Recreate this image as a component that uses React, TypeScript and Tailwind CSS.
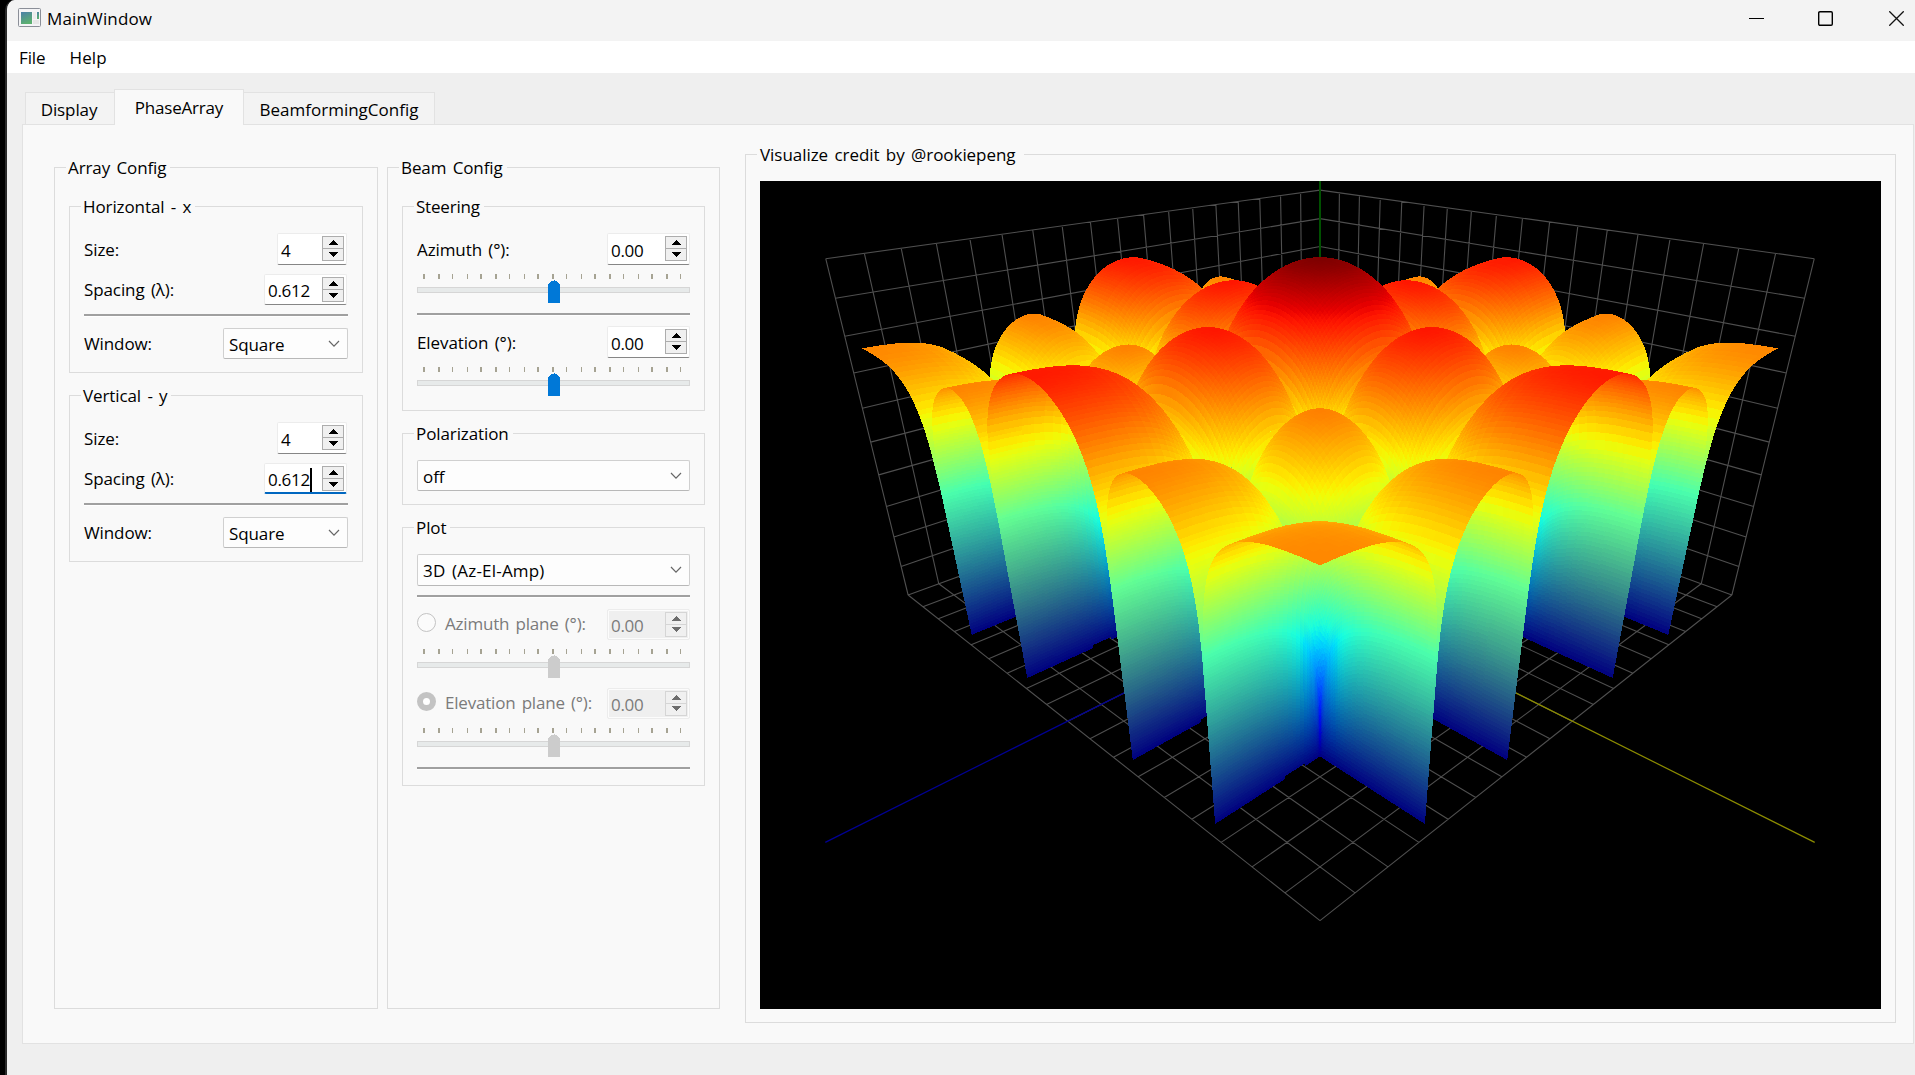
import React, { useMemo } from "react";

/* ---------- 3D pattern plot ---------- */

const VIEW_W = 1121;
const VIEW_H = 828;
const CENTER_X = 560;
const FOCAL = VIEW_W / 2 / Math.tan(Math.PI / 6);
const DIST = 300;
const SIN_E = 0.5;
const COS_E = Math.sqrt(3) / 2;
const BINS = 512;
const SPACING = 0.612;
const PATCH = 3;

type Vec = [number, number, number];

function project(x: number, y: number, z: number): [number, number] {
  const f = -(x + y) / Math.SQRT2;
  const r = (y - x) / Math.SQRT2;
  const depth = DIST + f * COS_E - z * SIN_E;
  const up = z * COS_E + f * SIN_E;
  return [CENTER_X + (FOCAL * r) / depth, VIEW_H / 2 - (FOCAL * up) / depth];
}

function ramp(v: number, stops: number[][]): number {
  for (let i = 1; i < stops.length; i++) {
    if (v <= stops[i][0]) {
      const [a, p] = stops[i - 1];
      const [b, q] = stops[i];
      return p + ((q - p) * (v - a)) / (b - a);
    }
  }
  return stops[stops.length - 1][1];
}

function jet(v: number): Vec {
  return [
    255 * ramp(v, [[0, 0], [0.35, 0], [0.66, 1], [0.89, 1], [1, 0.5]]),
    255 * ramp(v, [[0, 0], [0.125, 0], [0.375, 1], [0.64, 1], [0.91, 0], [1, 0]]),
    255 * ramp(v, [[0, 0.5], [0.11, 1], [0.34, 1], [0.65, 0], [1, 0]]),
  ];
}

// Array factor of a four element line, in dB, at the given bin.
function gain(k: number): number {
  if (k === 0) return 0;
  const psi = (2 * Math.PI * k) / BINS;
  const af = Math.abs(Math.sin(2 * psi) / (4 * Math.sin(psi / 2)));
  return 20 * Math.log10(Math.max(af, 1e-9));
}

// Bins, dense near each null and sparse on the lobes.
function sampleBins(): number[] {
  const offs = [0, 1, 2, 3, 4, 6, 8, 10, 13, 16, 19, 22, 25, 28, 31, 35, 39, 43, 47, 51, 55, 59, 64];
  const set = new Set<number>();
  for (const n of [-256, -128, 128, 256]) {
    for (const o of offs) {
      set.add(n + o);
      set.add(n - o);
    }
  }
  for (let k = -60; k <= 60; k += 4) set.add(k);
  set.add(313);
  set.add(-313);
  return [...set].filter((k) => Math.abs(k) <= 313).sort((a, b) => a - b);
}

function buildSurface(): { d: string; c: string }[] {
  const bins = sampleBins();
  const n = bins.length;
  const ang = bins.map((k) => (Math.asin(k / BINS / SPACING) * 180) / Math.PI);
  const g = bins.map(gain);
  const zs: number[][] = [];
  const cs: Vec[][] = [];
  for (let i = 0; i < n; i++) {
    zs.push([]);
    cs.push([]);
    for (let j = 0; j < n; j++) {
      const z = Math.max(0, 100 + g[i] + g[j]);
      zs[i].push(z);
      cs[i].push(jet(z / 100));
    }
  }
  const out: { d: string; c: string }[] = [];
  let last = "";
  let buf: string[] = [];
  const flush = () => {
    if (buf.length) out.push({ d: buf.join(""), c: last });
    buf = [];
  };
  const mix = (a: number, b: number, c: number, d: number, s: number, t: number) =>
    (a * (1 - s) + b * s) * (1 - t) + (c * (1 - s) + d * s) * t;
  const q = (v: number) => Math.min(255, Math.round(v / 2) * 2);
  const len = (a: number[], b: number[]) => Math.hypot(a[0] - b[0], a[1] - b[1]);
  for (let i = 0; i < n - 1; i++) {
    for (let j = 0; j < n - 1; j++) {
      const p00 = project(ang[i], ang[j], zs[i][j]);
      const p10 = project(ang[i + 1], ang[j], zs[i + 1][j]);
      const p01 = project(ang[i], ang[j + 1], zs[i][j + 1]);
      const p11 = project(ang[i + 1], ang[j + 1], zs[i + 1][j + 1]);
      // Only the steep cells beside a null need finer patches.
      const steep = Math.min(zs[i][j], zs[i + 1][j], zs[i][j + 1], zs[i + 1][j + 1]) < 60;
      const size = steep ? PATCH : PATCH * 2;
      const ms = Math.max(1, Math.round(Math.max(len(p00, p10), len(p01, p11)) / (size + 1)));
      const mt = Math.max(1, Math.round(Math.max(len(p00, p01), len(p10, p11)) / size));
      const pts: string[][] = [];
      for (let a = 0; a <= ms; a++) {
        pts.push([]);
        for (let b = 0; b <= mt; b++) {
          const s = a / ms;
          const t = b / mt;
          const p = project(
            ang[i] * (1 - s) + ang[i + 1] * s,
            ang[j] * (1 - t) + ang[j + 1] * t,
            mix(zs[i][j], zs[i + 1][j], zs[i][j + 1], zs[i + 1][j + 1], s, t),
          );
          pts[a].push(p[0].toFixed(2) + " " + p[1].toFixed(2));
        }
      }
      for (let a = 0; a < ms; a++) {
        for (let b = 0; b < mt; b++) {
          const s = (a + 0.5) / ms;
          const t = (b + 0.5) / mt;
          const ch = [0, 1, 2].map((k) =>
            q(mix(cs[i][j][k], cs[i + 1][j][k], cs[i][j + 1][k], cs[i + 1][j + 1][k], s, t)),
          );
          const c = `rgb(${ch[0]},${ch[1]},${ch[2]})`;
          if (c !== last) {
            flush();
            last = c;
          }
          buf.push(`M${pts[a][b]}L${pts[a + 1][b]}L${pts[a + 1][b + 1]}L${pts[a][b + 1]}Z`);
        }
      }
    }
  }
  flush();
  return out;
}

function segment(a: Vec, b: Vec): string {
  const p = project(...a);
  const r = project(...b);
  return `M${p[0].toFixed(2)} ${p[1].toFixed(2)}L${r[0].toFixed(2)} ${r[1].toFixed(2)}`;
}

function buildGrid(): string {
  const parts: string[] = [];
  for (let v = -90; v <= 90; v += 10) {
    parts.push(segment([v, -90, 0], [v, 90, 0]), segment([-90, v, 0], [90, v, 0]));
    parts.push(segment([v, -90, 0], [v, -90, 100]), segment([-90, v, 0], [-90, v, 100]));
  }
  for (let z = 0; z <= 100; z += 10) {
    parts.push(segment([-90, -90, z], [90, -90, z]), segment([-90, -90, z], [-90, 90, z]));
  }
  return parts.join("");
}

function PatternPlot() {
  const surface = useMemo(buildSurface, []);
  const grid = useMemo(buildGrid, []);
  return (
    <svg width={VIEW_W} height={VIEW_H} viewBox={`0 0 ${VIEW_W} ${VIEW_H}`} className="block bg-black">
      <path d={grid} stroke="#4f4f4f" strokeWidth="1.1" fill="none" />
      <path d={segment([0, 0, 0], [150, 0, 0])} stroke="#000094" strokeWidth="1.2" />
      <path d={segment([0, 0, 0], [0, 150, 0])} stroke="#8c8c00" strokeWidth="1.2" />
      <path d="M560 0V400" stroke="#005000" strokeWidth="2" />
      <g shapeRendering="crispEdges">
        {surface.map((s, i) => (
          <path key={i} d={s.d} fill={s.c} />
        ))}
      </g>
    </svg>
  );
}

/* ---------- widgets ---------- */

function Group(props: { title: string; className: string; legend?: string; children?: React.ReactNode }) {
  return (
    <fieldset className={"min-w-0 border border-[#dcdcdc] " + props.className}>
      <legend className="ml-[11px] h-6 pl-[2px] pr-1 leading-[25px] whitespace-nowrap">
        <span className={props.legend ?? ""}>{props.title}</span>
      </legend>
      {props.children}
    </fieldset>
  );
}

function Separator({ className = "" }: { className?: string }) {
  return <div className={"h-[3px] shrink-0 border-t-2 border-b border-t-[#a0a0a0] border-b-white " + className} />;
}

function Arrow({ down, disabled }: { down?: boolean; disabled?: boolean }) {
  return (
    <svg width="10" height="5" viewBox="0 0 10 5" shapeRendering="crispEdges">
      <path d={down ? "M0 0h10L5 5z" : "M0 5h10L5 0z"} fill={disabled ? "#6d6d6d" : "#000"} />
    </svg>
  );
}

function SpinBox(props: { value: string; width: string; disabled?: boolean; focus?: boolean; height?: string }) {
  const { disabled, focus } = props;
  const frame = disabled
    ? "border border-[#ececec] bg-[#efefef] text-[#7b7b7b] shadow-[inset_0_0_0_1px_#fcfcfc]"
    : focus
      ? "border border-[#ececec] border-b-2 border-b-[#0067c0] bg-white"
      : "border border-[#ececec] border-b-[#868686] bg-white";
  const edge = disabled ? "border-[#d5d5d5]" : "border-[#adadad]";
  return (
    <div className={"flex items-start justify-between rounded-[2px] pl-[3px] " + props.width + " " + (props.height ?? "h-8") + " " + frame}>
      <span className="flex h-full items-center pt-[3px] tracking-[-0.3px]">
        {props.value}
        {focus && <span className="h-6 w-[2px] bg-black" />}
      </span>
      <span className={"mt-[2px] mr-[2px] flex h-[25px] w-[22px] flex-col border bg-[#f0f0f0] " + edge}>
        <span className={"flex h-3 items-center justify-center border-b " + edge}>
          <Arrow disabled={disabled} />
        </span>
        <span className="flex flex-1 items-center justify-center pb-px">
          <Arrow down disabled={disabled} />
        </span>
      </span>
    </div>
  );
}

function ComboBox({ value, className }: { value: string; className: string }) {
  return (
    <div className={"flex shrink-0 items-center justify-between rounded-[2px] border border-[#d0d0d0] border-b-[#b8b8b8] bg-[#fdfdfd] pr-[7px] pl-[5px] " + className}>
      <span className="pt-[2px]">{value}</span>
      <svg width="12" height="8" viewBox="0 0 12 8" fill="none" stroke="#666" strokeWidth="1.2">
        <path d="M1 1l5 5.2L11 1" />
      </svg>
    </div>
  );
}

const TICKS = [7, 22, 35, 50, 64, 79, 92, 107, 121, 136, 149, 164, 178, 193, 206, 221, 235, 250, 263];
const WIDE_TICKS = new Set([7, 22, 64, 79, 121, 136, 178, 193, 235, 250]);

function Slider({ disabled, className = "" }: { disabled?: boolean; className?: string }) {
  return (
    <svg width="273" height="29" viewBox="0 0 273 29" shapeRendering="crispEdges" className={"block shrink-0 " + className}>
      {TICKS.map((x) => (
        <rect key={x} x={WIDE_TICKS.has(x) ? x - 1 : x} y="0" width={WIDE_TICKS.has(x) ? 2 : 1} height="5" fill="#a6a393" />
      ))}
      <rect x="0.5" y="13.5" width="272" height="5" fill="#e7eaea" stroke="#d6d6d6" />
      <path d="M131 10l4-3h1l1-1l1 1h1l4 3v19h-12z" fill={disabled ? "#cccccc" : "#0078d7"} />
    </svg>
  );
}

function Row({ label, children, className = "h-8" }: { label: string; children: React.ReactNode; className?: string }) {
  return (
    <div className={"flex shrink-0 items-center justify-between " + className}>
      <span className="pt-px whitespace-nowrap">{label}</span>
      {children}
    </div>
  );
}

function ArrayAxis({ title, focus }: { title: string; focus?: boolean }) {
  return (
    <Group title={title} className="h-[179px] w-[294px]">
      <div className="flex flex-col px-[14px] pt-[15px]">
        <Row label="Size:" className="h-8 pr-px">
          <SpinBox value="4" width="w-[70px]" />
        </Row>
        <Row label="Spacing (λ):" className="mt-[9px] h-[31px] pr-px">
          <SpinBox value="0.612" width="w-[83px]" focus={focus} height="h-[31px]" />
        </Row>
        <Separator className="mt-[9px]" />
        <Row label="Window:" className="mt-[11px] h-[31px]">
          <ComboBox value="Square" className="h-[31px] w-[125px]" />
        </Row>
      </div>
    </Group>
  );
}

function PlaneRow({ label, checked, className }: { label: string; checked?: boolean; className: string }) {
  return (
    <div className={"flex shrink-0 items-center text-[#7b7b7b] " + className}>
      <span
        className={
          "mr-[9px] mb-[3px] size-[19px] rounded-full " +
          (checked ? "border-[6px] border-[#c3c3c3] bg-white" : "border border-[#c3c3c3] bg-[#fbfbfb]")
        }
      />
      <span className="flex-1 tracking-[-0.2px] whitespace-nowrap">{label}</span>
      <SpinBox value="0.00" width="w-[83px]" disabled height="h-[31px]" />
    </div>
  );
}

function WindowIcon() {
  return (
    <svg width="23" height="19" viewBox="0 0 23 19">
      <defs>
        <linearGradient id="pane" x1="0" y1="0" x2="0.4" y2="1">
          <stop offset="0" stopColor="#4a7fa8" />
          <stop offset="1" stopColor="#5cb070" />
        </linearGradient>
      </defs>
      <rect x="0.5" y="0.5" width="22" height="18" rx="1" fill="#f4f4f6" stroke="#8b8f98" />
      <rect x="3" y="4" width="11" height="12" fill="url(#pane)" />
      <rect x="15" y="4" width="3" height="7" fill="#ececec" />
      <rect x="19" y="4" width="2" height="7" fill="url(#pane)" />
      <rect x="15" y="12" width="6" height="4" fill="#e6e6e6" />
    </svg>
  );
}

export default function App() {
  return (
    <div className="h-[1075px] w-[1915px] overflow-hidden bg-black pl-[5px] font-['Open_Sans',sans-serif] text-[17px] tracking-[-0.1px] [word-spacing:2px] text-black">
      <div className="flex h-full flex-col overflow-hidden rounded-tl-[10px] border-l-2 border-[#2b2b2b] bg-[#efefef]">
        <header className="flex h-[41px] shrink-0 items-start justify-between bg-[#f3f3f3] pr-[11px] pl-[11px]">
          <div className="flex pt-2">
            <WindowIcon />
            <span className="ml-[6px] leading-[22px] tracking-[0.15px]">MainWindow</span>
          </div>
          <div className="flex pt-[11px]">
            <svg width="15" height="15" className="block" shapeRendering="crispEdges">
              <path d="M0 7.5h15" stroke="#000" />
            </svg>
            <svg width="15" height="15" className="ml-[54px] block" fill="none" stroke="#000" strokeWidth="1.4">
              <rect x="0.7" y="0.7" width="13.6" height="13.6" rx="1.2" />
            </svg>
            <svg width="15" height="15" className="ml-[56px] block" fill="none" stroke="#111" strokeWidth="1.3">
              <path d="M0.3 0.3l14.4 14.4M14.7 0.3L0.3 14.7" />
            </svg>
          </div>
        </header>
        <nav className="flex h-8 shrink-0 items-center gap-[24px] bg-white pt-px pl-3">
          <span>File</span>
          <span className="tracking-[0.1px]">Help</span>
        </nav>

        <div className="flex shrink-0 items-end pt-4 pl-[18px] leading-none">
          <div className="flex h-[32px] w-[89px] items-center justify-center border border-r-0 border-b-0 border-[#e2e2e2] bg-[#f3f3f3] pt-px pr-[2px]">
            Display
          </div>
          <div className="relative z-10 -mb-px flex h-9 w-[130px] items-center justify-center border border-b-0 border-[#e2e2e2] bg-[#f9f9f9] tracking-[-0.2px]">
            PhaseArray
          </div>
          <div className="flex h-[32px] w-[191px] items-center justify-center border border-b-0 border-l-0 border-[#e2e2e2] bg-[#f3f3f3] pt-px tracking-[0px]">
            BeamformingConfig
          </div>
        </div>

        <main className="mr-px ml-[15px] flex h-[920px] shrink-0 items-start border border-[#e2e2e2] bg-[#f9f9f9] pl-[31px]">
          <Group title="Array Config" className="mt-[30px] h-[854px] w-[324px]">
            <div className="flex flex-col gap-[10px] pt-[15px] pl-[14px]">
              <ArrayAxis title="Horizontal - x" />
              <ArrayAxis title="Vertical - y" focus />
            </div>
          </Group>

          <Group title="Beam Config" className="mt-[30px] ml-[9px] h-[854px] w-[333px]">
            <div className="flex flex-col gap-[10px] pt-[15px] pl-[14px]">
              <Group title="Steering" legend="tracking-[-0.2px]" className="h-[217px] w-[303px]">
                <div className="flex flex-col px-[14px] pt-[15px]">
                  <Row label="Azimuth (°):">
                    <SpinBox value="0.00" width="w-[83px]" />
                  </Row>
                  <Slider className="mt-[9px]" />
                  <Separator className="mt-[10px]" />
                  <Row label="Elevation (°):" className="mt-[10px] h-8">
                    <SpinBox value="0.00" width="w-[83px]" />
                  </Row>
                  <Slider className="mt-[9px]" />
                </div>
              </Group>
              <Group title="Polarization" className="h-[84px] w-[303px]">
                <div className="px-[14px] pt-[15px]">
                  <ComboBox value="off" className="h-[31px]" />
                </div>
              </Group>
              <Group title="Plot" className="h-[271px] w-[303px]">
                <div className="flex flex-col px-[14px] pt-[15px]">
                  <ComboBox value="3D (Az-El-Amp)" className="h-8 tracking-[0.2px]" />
                  <Separator className="mt-[9px]" />
                  <PlaneRow label="Azimuth plane (°):" className="mt-[10px] h-[32px]" />
                  <Slider disabled className="mt-[9px]" />
                  <PlaneRow label="Elevation plane (°):" checked className="mt-[10px] h-[30px]" />
                  <Slider disabled className="mt-[10px]" />
                  <Separator className="mt-[10px]" />
                </div>
              </Group>
            </div>
          </Group>

          <Group title="Visualize credit by @rookiepeng" legend="tracking-[-0.05px] ml-px mr-1" className="mt-[17px] ml-[25px] h-[881px] w-[1151px]">
            <div className="pt-[15px] pl-[14px]">
              <PatternPlot />
            </div>
          </Group>
        </main>
      </div>
    </div>
  );
}
